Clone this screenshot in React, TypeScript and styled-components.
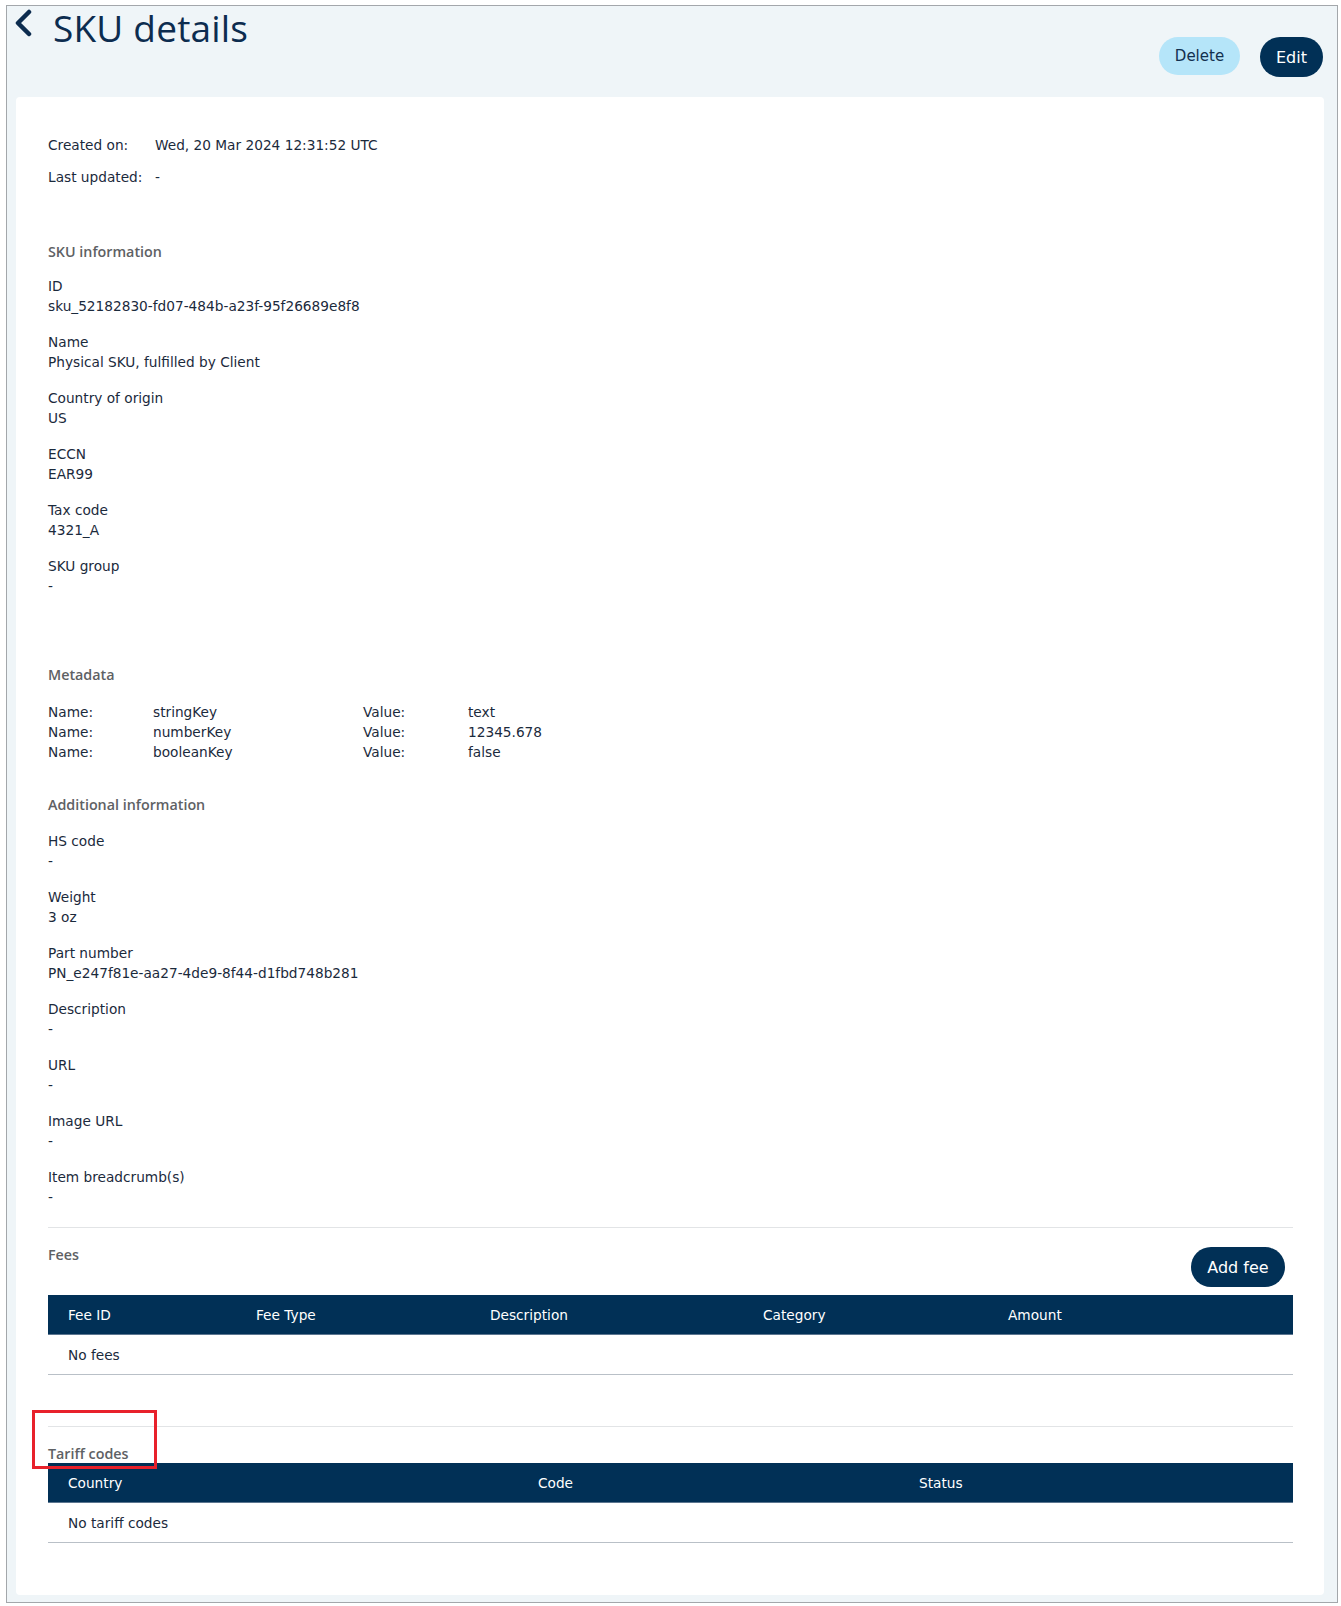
import React from 'react';
import styled, { createGlobalStyle } from 'styled-components';

const GlobalStyle = createGlobalStyle`
  html, body {
    margin: 0;
    padding: 0;
    background: #ffffff;
  }
  body {
    font-family: 'DejaVu Sans', 'Open Sans', sans-serif;
    color: #1b2a3c;
    -webkit-font-smoothing: antialiased;
  }
  * {
    box-sizing: border-box;
  }
`;

const Frame = styled.div`
  margin: 5px 3px 2px 6px;
  border: 1px solid #a3a7ab;
  background-color: #eff5f8;
  display: flex;
  flex-direction: column;
`;

const Header = styled.div`
  display: flex;
  justify-content: space-between;
  align-items: flex-start;
  height: 91px;
  padding: 0 14px 0 6px;
`;

const TitleBlock = styled.div`
  display: flex;
  align-items: flex-start;
`;

const BackButton = styled.button`
  display: flex;
  align-items: center;
  justify-content: center;
  width: 20px;
  height: 30px;
  margin-top: 2px;
  padding: 0;
  border: none;
  background: none;
  color: #0c2c4f;
  cursor: pointer;
`;

const Title = styled.h1`
  margin: 0 0 0 20px;
  font-family: 'Open Sans', sans-serif;
  font-size: 37px;
  font-weight: 400;
  line-height: 44px;
  color: #0c2c4f;
  letter-spacing: 0.2px;
`;

const Actions = styled.div`
  display: flex;
  gap: 20px;
  margin-top: 31px;
`;

const PillButton = styled.button<{ variant: 'primary' | 'soft'; width: number }>`
  width: ${(props) => props.width}px;
  height: ${(props) => (props.variant === 'primary' ? '40px' : '38px')};
  padding: 0;
  border: none;
  border-radius: 20px;
  background-color: ${(props) =>
    props.variant === 'primary' ? '#013056' : '#b5e5f9'};
  color: ${(props) => (props.variant === 'primary' ? '#ffffff' : '#12304f')};
  font-family: 'DejaVu Sans', sans-serif;
  font-size: ${(props) => (props.variant === 'primary' ? '16px' : '15px')};
  font-weight: 400;
  cursor: pointer;
`;

const Card = styled.div`
  margin: 0 13px 7px 9px;
  padding: 38px 31px 52px 32px;
  background-color: #ffffff;
  border-radius: 4px;
  font-size: 13.7px;
  line-height: 20px;
`;

const Stamps = styled.div`
  display: flex;
  flex-direction: column;
  gap: 12px;
`;

const StampRow = styled.div`
  display: flex;
`;

const StampLabel = styled.span<{ width: number }>`
  width: ${(props) => props.width}px;
`;

const Section = styled.section<{ top: number }>`
  position: relative;
  margin-top: ${(props) => props.top}px;
`;

const SectionTitle = styled.h2<{ lineHeight?: number }>`
  margin: 0;
  font-family: 'Open Sans', sans-serif;
  font-size: 14.3px;
  font-weight: 600;
  line-height: ${(props) => props.lineHeight ?? 20}px;
  color: #5e6164;
`;

const FieldList = styled.div<{ top: number }>`
  display: flex;
  flex-direction: column;
  gap: 16px;
  margin-top: ${(props) => props.top}px;
`;

const Field = styled.div`
  display: flex;
  flex-direction: column;
`;

const MetaGrid = styled.div`
  display: grid;
  grid-template-columns: 105px 210px 105px 1fr;
  margin-top: 17px;
`;

const Divider = styled.hr<{ top: number }>`
  margin: ${(props) => props.top}px 0 0;
  border: none;
  border-top: 1px solid #e2e4e6;
`;

const FeesHead = styled.div`
  display: flex;
  justify-content: space-between;
  align-items: flex-start;
  margin-top: 19px;
  padding-right: 8px;
`;

const Table = styled.div<{ top: number }>`
  margin-top: ${(props) => props.top}px;
`;

const HeadRow = styled.div<{ columns: string }>`
  display: grid;
  grid-template-columns: ${(props) => props.columns};
  height: 40px;
  align-items: center;
  background-color: #013056;
  border-bottom: 1px solid #5c7690;
  color: #ffffff;
`;

const HeadCell = styled.div`
  padding: 0 20px;
`;

const EmptyRow = styled.div`
  height: 40px;
  display: flex;
  align-items: center;
  padding: 0 20px;
  border-bottom: 1px solid #b9c0c7;
`;

const Highlight = styled.div`
  position: absolute;
  top: -35px;
  left: -16px;
  width: 125px;
  height: 59px;
  border: 3px solid #e8212b;
  pointer-events: none;
`;

const skuFields = [
  ['ID', 'sku_52182830-fd07-484b-a23f-95f26689e8f8'],
  ['Name', 'Physical SKU, fulfilled by Client'],
  ['Country of origin', 'US'],
  ['ECCN', 'EAR99'],
  ['Tax code', '4321_A'],
  ['SKU group', '-'],
];

const additionalFields = [
  ['HS code', '-'],
  ['Weight', '3 oz'],
  ['Part number', 'PN_e247f81e-aa27-4de9-8f44-d1fbd748b281'],
  ['Description', '-'],
  ['URL', '-'],
  ['Image URL', '-'],
  ['Item breadcrumb(s)', '-'],
];

const metadata = [
  ['stringKey', 'text'],
  ['numberKey', '12345.678'],
  ['booleanKey', 'false'],
];

const ChevronLeft = () => (
  <svg width="20" height="28" viewBox="0 0 20 28" fill="none">
    <polyline
      points="16,3 5,14 16,25"
      stroke="currentColor"
      strokeWidth="4.5"
      strokeLinecap="round"
      strokeLinejoin="round"
    />
  </svg>
);

const App: React.FC = () => {
  return (
    <>
      <GlobalStyle />
      <Frame>
        <Header>
          <TitleBlock>
            <BackButton aria-label="Back">
              <ChevronLeft />
            </BackButton>
            <Title>SKU details</Title>
          </TitleBlock>
          <Actions>
            <PillButton variant="soft" width={81}>
              Delete
            </PillButton>
            <PillButton variant="primary" width={63}>
              Edit
            </PillButton>
          </Actions>
        </Header>

        <Card>
          <Stamps>
            <StampRow>
              <StampLabel width={107}>Created on:</StampLabel>
              <span>Wed, 20 Mar 2024 12:31:52 UTC</span>
            </StampRow>
            <StampRow>
              <StampLabel width={107}>Last updated:</StampLabel>
              <span>-</span>
            </StampRow>
          </Stamps>

          <Section top={55}>
            <SectionTitle>SKU information</SectionTitle>
            <FieldList top={14}>
              {skuFields.map(([label, value]) => (
                <Field key={label}>
                  <span>{label}</span>
                  <span>{value}</span>
                </Field>
              ))}
            </FieldList>
          </Section>

          <Section top={69}>
            <SectionTitle>Metadata</SectionTitle>
            <MetaGrid>
              {metadata.map(([name, value]) => (
                <React.Fragment key={name}>
                  <span>Name:</span>
                  <span>{name}</span>
                  <span>Value:</span>
                  <span>{value}</span>
                </React.Fragment>
              ))}
            </MetaGrid>
          </Section>

          <Section top={33}>
            <SectionTitle>Additional information</SectionTitle>
            <FieldList top={16}>
              {additionalFields.map(([label, value]) => (
                <Field key={label}>
                  <span>{label}</span>
                  <span>{value}</span>
                </Field>
              ))}
            </FieldList>
          </Section>

          <Divider top={20} />

          <Section top={0}>
            <FeesHead>
              <SectionTitle lineHeight={16}>Fees</SectionTitle>
              <PillButton variant="primary" width={94}>
                Add fee
              </PillButton>
            </FeesHead>
            <Table top={8}>
              <HeadRow columns="188px 234px 273px 245px 1fr">
                <HeadCell>Fee ID</HeadCell>
                <HeadCell>Fee Type</HeadCell>
                <HeadCell>Description</HeadCell>
                <HeadCell>Category</HeadCell>
                <HeadCell>Amount</HeadCell>
              </HeadRow>
              <EmptyRow>No fees</EmptyRow>
            </Table>
          </Section>

          <Divider top={51} />

          <Section top={18}>
            <Highlight />
            <SectionTitle lineHeight={18}>Tariff codes</SectionTitle>
            <Table top={0}>
              <HeadRow columns="470px 381px 1fr">
                <HeadCell>Country</HeadCell>
                <HeadCell>Code</HeadCell>
                <HeadCell>Status</HeadCell>
              </HeadRow>
              <EmptyRow>No tariff codes</EmptyRow>
            </Table>
          </Section>
        </Card>
      </Frame>
    </>
  );
};

export default App;
